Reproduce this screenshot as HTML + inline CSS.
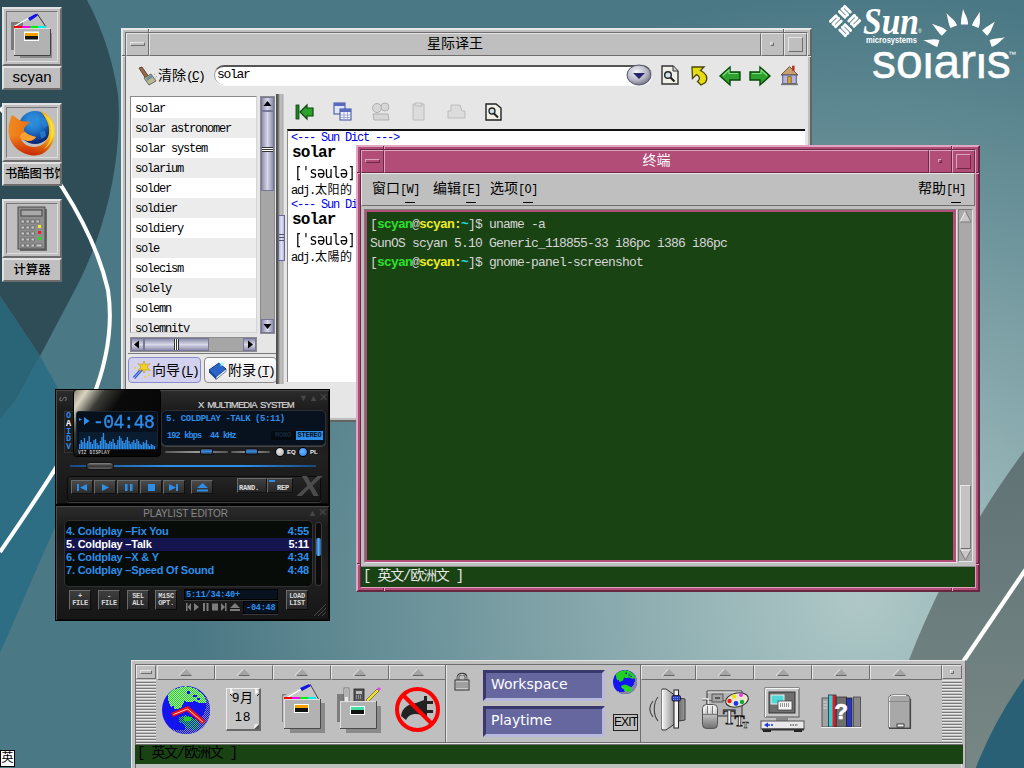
<!DOCTYPE html>
<html lang="zh-CN">
<head>
<meta charset="utf-8">
<title>Solaris CDE Desktop</title>
<style>
*{box-sizing:border-box;margin:0;padding:0}
html,body{width:1024px;height:768px;overflow:hidden}
body{position:relative;font-family:"Liberation Sans","Noto Sans CJK SC",sans-serif;font-size:13px;color:#000;
 background:#4a7884 radial-gradient(ellipse 667px 606px at 860px 600px,#afc8c7 0%,#4a7884 100%)}
.abs{position:absolute}
#bg{position:absolute;left:0;top:0}
/* ---------- CDE window frames ---------- */
.win{position:absolute;background:#bfbfbf;border:2px solid;border-color:#e8e8e8 #646464 #646464 #e8e8e8}
.win.act{background:#b24d78;border-color:#e0a8c2 #662842 #662842 #e0a8c2}
.win .inner{position:absolute;left:2px;top:2px;right:2px;bottom:2px;border:1px solid;border-color:#6e6e6e #e4e4e4 #e4e4e4 #6e6e6e}
.win.act .inner{border-color:#6a2a46 #dca3bd #dca3bd #6a2a46}
.tbar{position:absolute;left:0;right:0;top:0;height:23px;background:#bfbfbf}
.act .tbar{background:#b24d78}
.tb{position:absolute;top:0;height:23px;border:1px solid;border-color:#e4e4e4 #6e6e6e #6e6e6e #e4e4e4}
.act .tb{border-color:#dca3bd #6a2a46 #6a2a46 #dca3bd}
.ttl{left:23px;right:46px;text-align:center;font-size:14px;line-height:18px;font-family:"Liberation Sans","Noto Sans CJK SC",sans-serif}
.act .ttl{color:#fff}
.bmenu{left:0;width:23px}
.bmenu i{position:absolute;left:3px;top:8px;width:15px;height:4px;border:1px solid;border-color:#e4e4e4 #6e6e6e #6e6e6e #e4e4e4}
.act .bmenu i{border-color:#dca3bd #6a2a46 #6a2a46 #dca3bd}
.bmin{right:23px;width:23px}
.bmin i{position:absolute;left:8px;top:8px;width:4px;height:4px;border:1px solid;border-color:#e4e4e4 #6e6e6e #6e6e6e #e4e4e4}
.act .bmin i{border-color:#dca3bd #6a2a46 #6a2a46 #dca3bd}
.bmax{right:0;width:23px}
.bmax i{position:absolute;left:3px;top:3px;width:15px;height:15px;border:1px solid;border-color:#e4e4e4 #6e6e6e #6e6e6e #e4e4e4}
.act .bmax i{border-color:#dca3bd #6a2a46 #6a2a46 #dca3bd}
.client{position:absolute;left:0;right:0;top:23px;bottom:0;overflow:hidden}

/* ---------- desktop icons ---------- */
.dicon{position:absolute;width:60px;height:83px}
.dicon .pic{position:absolute;left:0;top:0;width:60px;height:59px;background:#bfbfbf;border:2px solid;border-color:#e2e2e2 #6c6c6c #6c6c6c #e2e2e2}
.dicon .pic .fr{position:absolute;left:2px;top:2px;width:52px;height:51px;border:1px solid;border-color:#7a7a7a #dedede #dedede #7a7a7a}
.dicon .lbl{position:absolute;left:0;top:59px;width:60px;height:24px;background:#bfbfbf;border:2px solid;border-color:#e2e2e2 #6c6c6c #6c6c6c #e2e2e2;text-align:center;font-size:15px;line-height:19px;white-space:nowrap;overflow:hidden}
.dicon svg{position:absolute;left:0;top:0}

/* ---------- StarDict ---------- */
.mono6{font-family:"Liberation Mono","Noto Sans CJK SC",monospace;font-size:12px;letter-spacing:-1.2px;white-space:pre}
.sdlist{position:absolute;left:130px;top:96px;width:127px;height:237px;background:#fff;border:1px solid;border-color:#8a8a8a #d4d4d4 #d4d4d4 #8a8a8a;overflow:hidden;padding-top:1px}
.sdlist div{height:20px;line-height:19px;padding:2px 0 0 3px;margin-left:1px}
.sdlist div:nth-child(even){background:#ececec}
.gbtn{position:absolute;height:26px;border:1px solid #8c8c8c;border-radius:4px;background:linear-gradient(#fdfdfd,#e9e9e9);font-size:14px;line-height:23px;white-space:nowrap}
.gbtn u{text-decoration:underline}
.sb{position:absolute;background:#a6a6a6}
.sbtn{position:absolute;background:linear-gradient(90deg,#8e8eae,#d8d8e8 50%,#8e8eae);border:1px solid #77779a}

/* ---------- Terminal ---------- */
.tmenu{position:absolute;top:177px;font-size:14px;line-height:22px;white-space:nowrap;font-family:"Liberation Sans","Noto Sans CJK SC",sans-serif}
.tmenu span{font-family:"Liberation Mono",monospace;font-size:12px;letter-spacing:-.6px}
.tmenu u{text-decoration:none;position:relative;display:inline-block}
.tmenu u:after{content:"";position:absolute;left:-2px;right:-2px;bottom:-2px;height:1px;background:#000}
.tline{position:absolute;left:370px;margin-top:1px;font-family:"Liberation Mono","Noto Sans CJK SC",monospace;font-size:13px;letter-spacing:-.8px;line-height:19px;color:#d6d6d6;white-space:pre}
.tline b{font-weight:bold}

/* ---------- XMMS ---------- */
#xm{position:absolute;left:55px;top:389px;width:275px;height:232px;background:#1c1c1c;overflow:hidden;font-family:"Liberation Sans",sans-serif}
#xm .pnl{position:absolute;left:0;width:275px;height:116px;border:1px solid #000;background:linear-gradient(#2c2c2c,#1a1a1a 20%,#202020 60%,#161616);box-shadow:inset 1px 1px 0 #4a4a4a,inset -1px -1px 0 #0a0a0a}
#xm .led{position:absolute;color:#2d8eea;font-family:"Liberation Mono",monospace;font-weight:bold;white-space:pre}
#xm .px{position:absolute;color:#2d8eea;font-family:"Liberation Mono",monospace;font-size:9px;font-weight:bold;white-space:pre;letter-spacing:-.2px}
#xm .cb{position:absolute;top:91px;width:22px;height:14px;background:linear-gradient(#4a4a4a,#2c2c2c);border:1px solid;border-color:#6a6a6a #111 #111 #6a6a6a}
#xm .pb{position:absolute;top:201px;width:22px;height:20px;background:linear-gradient(#3e3e3e,#262626);border:1px solid;border-color:#6a6a6a #0c0c0c #0c0c0c #6a6a6a;color:#d8d8d8;font-family:"Liberation Mono",monospace;font-weight:bold;font-size:7px;line-height:7px;text-align:center;padding-top:2px;letter-spacing:-.3px}
#xm .row{position:absolute;left:11px;width:245px;height:13px;line-height:13px;font-size:11px;font-weight:bold;color:#2d8eea;white-space:nowrap;letter-spacing:-.2px}
#xm .row span{position:absolute;right:2px;top:0}

/* ---------- Front panel ---------- */
#fp{position:absolute;left:131px;top:660px;width:835px;height:110px;background:#bfbfbf;border:1px solid;border-color:#e6e6e6 #6e6e6e #6e6e6e #e6e6e6}
#fp .in{position:absolute;left:3px;top:3px;right:3px;bottom:0;border:1px solid;border-color:#6e6e6e #e6e6e6 #e6e6e6 #6e6e6e}
.fpa{position:absolute;top:665px;height:15px;border:1px solid;border-color:#e6e6e6 #6e6e6e #6e6e6e #e6e6e6;background:#bfbfbf}
.fpa:not(:has(i)):after{content:"";position:absolute;left:50%;top:3px;margin-left:-6px;border:6px solid transparent;border-top:none;border-bottom:6px solid #a4a4a4;filter:drop-shadow(0 1px 0 #666) drop-shadow(-1px 0 0 #eee)}
.ridge{position:absolute;background:repeating-linear-gradient(#e8e8e8 0,#e8e8e8 1px,#bfbfbf 1px,#bfbfbf 2px,#7a7a7a 2px,#7a7a7a 3px)}
.wsb{position:absolute;left:483px;width:122px;height:31px;background:#6767a0;border:3px solid;border-color:#38386c #b8b8dc #b8b8dc #38386c;color:#fff;font-family:"DejaVu Sans","Liberation Sans",sans-serif;font-size:14px;line-height:22px;padding-left:5px;letter-spacing:0}

.nv,.nh{position:absolute;background:#646464}
.nv{width:1px;height:4px;box-shadow:1px 0 0 #e8e8e8}
.nh{height:1px;width:4px;box-shadow:0 1px 0 #e8e8e8}
.act .nv,.act .nh{background:#662842}
.act .nv{box-shadow:1px 0 0 #e0a8c2}.act .nh{box-shadow:0 1px 0 #e0a8c2}
</style>
</head>
<body>
<svg id="bg" width="1024" height="768" viewBox="0 0 1024 768">
 <!-- left dark lens -->
 <path d="M0,0 L87,0 C100,25 112,55 118,95 C121,130 116,180 101,227 C92,255 84,272 78,284 L40,356 L0,296 Z" fill="#2f4d57"/>
 <!-- left mid teal -->
 <path d="M0,296 L40,356 L16,400 L0,420 Z" fill="#2a6477"/>
 <path d="M40,356 L60,392 L60,516 C40,560 15,620 0,653 L0,420 L16,400 Z" fill="#2e6e84"/>
 <!-- white arc -->
 <path d="M0,108 C40,150 92,220 108,290 C114,330 104,370 92,400 C80,430 60,465 0,552" fill="none" stroke="#fff" stroke-width="4"/>
 <!-- right gray shape -->
 <defs><linearGradient id="gsh" x1="0" y1="450" x2="0" y2="768" gradientUnits="userSpaceOnUse"><stop offset="0" stop-color="#5f7275"/><stop offset="1" stop-color="#778785"/></linearGradient></defs>
 <circle cx="1738" cy="981" r="889" fill="url(#gsh)"/>
 <circle cx="1352" cy="914" r="403.600" fill="#2a6076"/>
 <path d="M1026,569 L930,710.500" fill="none" stroke="#fff" stroke-width="4.200"/>
</svg>



<!-- ================= Solaris logo ================= -->
<svg class="abs" style="left:820px;top:0" width="204" height="90" viewBox="820 0 204 90">
 <g transform="translate(845,21) rotate(45) scale(1.06)" stroke="#fff" stroke-width="2.700" stroke-linecap="round" fill="none">
  <path d="M-10,-9.5 H-2.5 M-10,-6 H-2.5 M-10,-2.5 H-2.5"/>
  <path d="M2.5,-10 V-2.5 M6,-10 V-2.5 M9.5,-10 V-2.5"/>
  <path d="M2.5,2.5 H10 M2.5,6 H10 M2.5,9.5 H10"/>
  <path d="M-9.5,2.5 V10 M-6,2.5 V10 M-2.5,2.5 V10"/>
  <path d="M-10,-9.5 V-6 M-2.5,-6 V-2.5 M2.5,-10 H6 M6,-2.5 H9.5 M10,9.5 V6 M2.5,6 V2.5 M-2.5,10 H-6 M-6,2.5 H-9.5" stroke-width="2"/>
 </g>
 <g fill="#fff"><path transform="translate(937.9,43.3) rotate(-72)" d="M-3.6,0.5 C-3.6,-5 -2.5,-8 -1.5,-15 C0.5,-9 3.6,-6 3.6,0.5 Z"/><path transform="translate(944.0,32.9) rotate(-47)" d="M-3.6,0.5 C-3.6,-5 -2.5,-8 -1.5,-15 C0.5,-9 3.6,-6 3.6,0.5 Z"/><path transform="translate(953.6,26.2) rotate(-23)" d="M-3.6,0.5 C-3.6,-5 -2.5,-8 -1.5,-15 C0.5,-9 3.6,-6 3.6,0.5 Z"/><path transform="translate(964.5,24.0) rotate(0)" d="M-3.6,0.5 C-3.6,-5 -2.5,-8 -1.5,-15 C0.5,-9 3.6,-6 3.6,0.5 Z"/><path transform="translate(975.4,26.2) rotate(23)" d="M-3.6,0.5 C-3.6,-5 -2.5,-8 -1.5,-15 C0.5,-9 3.6,-6 3.6,0.5 Z"/><path transform="translate(985.0,32.9) rotate(47)" d="M-3.6,0.5 C-3.6,-5 -2.5,-8 -1.5,-15 C0.5,-9 3.6,-6 3.6,0.5 Z"/><path transform="translate(991.1,43.3) rotate(72)" d="M-3.6,0.5 C-3.6,-5 -2.5,-8 -1.5,-15 C0.5,-9 3.6,-6 3.6,0.5 Z"/></g>
 <text x="863" y="34" font-family="'Liberation Serif',serif" font-style="italic" font-weight="bold" font-size="38" fill="#fff" textLength="56" lengthAdjust="spacingAndGlyphs">Sun</text>
 <text x="918" y="33" font-family="'Liberation Sans',sans-serif" font-size="5" fill="#fff">®</text>
 <text x="866" y="43" font-family="'Liberation Sans',sans-serif" font-size="8.5" font-weight="bold" fill="#fff" textLength="51" lengthAdjust="spacingAndGlyphs">microsystems</text>
 <text x="1008" y="57" font-family="'Liberation Sans',sans-serif" font-size="8" fill="#fff">™</text>
</svg>
<div class="abs" style="left:872px;top:35px;font-family:'Liberation Sans',sans-serif;font-size:48px;line-height:54px;color:#fff;white-space:nowrap;letter-spacing:0;-webkit-text-stroke:.5px #fff">so<span style="display:inline-block;clip-path:inset(18px 0 0 0)">l</span>ar<span style="display:inline-block;clip-path:inset(19px 0 0 0)">i</span>s</div>

<!-- ================= Desktop icons ================= -->
<div class="dicon" style="left:2px;top:7px">
 <div class="pic"><div class="fr"></div>
  <svg width="56" height="55" viewBox="0 0 56 55">
   <rect x="7" y="13" width="12" height="28" fill="#7a7a7a"/>
   <rect x="16" y="24" width="32" height="25" fill="#8a8a8a"/>
   <path d="M10,17.500 L33,4.500" fill="none" stroke="#fff" stroke-width="1.3"/>
   <path d="M33,4.500 L42,18" fill="none" stroke="#333" stroke-width="1"/>
   <path d="M24,9 L32,4.500 L34,6.500 L26,12 Z" fill="#1212e6"/>
   <rect x="10" y="17" width="8" height="2.500" fill="#f00"/><rect x="18" y="17" width="8" height="2.500" fill="#f0f"/><rect x="26" y="17" width="8" height="2.500" fill="#0e0"/><rect x="34" y="17" width="8" height="2.500" fill="#0ee"/>
   <rect x="10" y="19" width="36" height="27" fill="#b2b2b2"/>
   <path d="M10.500,46 V19.500 H46" fill="none" stroke="#dedede" stroke-width="1"/>
   <path d="M10,46.500 H46.500 V20" fill="none" stroke="#444" stroke-width="1"/>
   <rect x="20" y="22.500" width="15" height="9.500" fill="#fff"/>
   <rect x="21" y="24" width="13" height="3" fill="#f7a000"/><rect x="21" y="27" width="13" height="3.500" fill="#111"/>
  </svg>
 </div>
 <div class="lbl" style="line-height:17px">scyan</div>
</div>
<div class="dicon" style="left:2px;top:103px">
 <div class="pic"><div class="fr"></div>
  <svg width="56" height="55" viewBox="0 0 56 55">
   <defs>
    <radialGradient id="ffg" cx="45%" cy="30%" r="65%"><stop offset="0" stop-color="#3ca8ea"/><stop offset=".55" stop-color="#1c6cc4"/><stop offset="1" stop-color="#0a2a78"/></radialGradient>
    <linearGradient id="fff" x1="0" y1="0" x2="1" y2="0"><stop offset="0" stop-color="#ee8a20"/><stop offset=".45" stop-color="#ee7010"/><stop offset=".8" stop-color="#f8b818"/><stop offset="1" stop-color="#fad828"/></linearGradient>
    <linearGradient id="ffb" x1="0" y1="0" x2="0" y2="1"><stop offset=".55" stop-color="#c82808" stop-opacity="0"/><stop offset="1" stop-color="#c02008" stop-opacity=".9"/></linearGradient>
   </defs>
   <circle cx="31" cy="22.500" r="16.500" fill="url(#ffg)"/>
   <path d="M26,9 l5,-1 l3,3 l-2,4 l4,2 l-1,5 l-5,1 l-2,-4 l-3,-2 z M37,12 l5,2 l2,6 l-4,3 l-2,-5 z M36,27 l5,-1 l1,5 l-5,3z" fill="#2a86d6" opacity=".75"/>
   <path id="fxp" d="M8,10 C4,18 3,30 8,38 C14,48 28,53 38,49 C48,44 53,32 50,20 C48,13 43,8 36,6 C42,12 46,20 45,28 C44,36 38,42 30,42 C24,42 19,39 17,34 L24,36 C28,36 31,34 32,32 C28,31 24,30 21,27 C19,25 20,22 23,20 L26,17 C22,16 18,17 15,15 C13,13 10,11 8,10 Z" fill="url(#fff)"/>
   <path d="M8,10 C4,18 3,30 8,38 C14,48 28,53 38,49 C48,44 53,32 50,20 C48,13 43,8 36,6 C42,12 46,20 45,28 C44,36 38,42 30,42 C24,42 19,39 17,34 L24,36 C28,36 31,34 32,32 C28,31 24,30 21,27 C19,25 20,22 23,20 L26,17 C22,16 18,17 15,15 C13,13 10,11 8,10 Z" fill="url(#ffb)"/>
   <path d="M17,34 L24,36 C28,36 31,34 32,32 C28,31 24,30 21,27 C17,28 15,31 17,34Z" fill="#f8a030"/>
   <path d="M40,10 C46,15 49,24 47,32 C46,37 43,41 40,44 C47,40 51,30 49,21 C48,16 44,12 40,10Z" fill="#fce040" opacity=".9"/>
  </svg>
 </div>
 <div class="lbl" style="font-size:12.300px;font-weight:500;letter-spacing:0;text-align:left;padding-left:1px;line-height:20px">书酷图书馆</div>
</div>
<div class="dicon" style="left:2px;top:199px">
 <div class="pic"><div class="fr"></div>
  <svg width="56" height="55" viewBox="0 0 56 55">
   <rect x="16" y="8" width="27" height="42" fill="#6a6a6a"/>
   <rect x="14" y="6" width="27" height="42" fill="#8e8e8e" stroke="#4c4c4c" stroke-width="1"/>
   <rect x="17" y="9" width="21" height="6" fill="#a8a8a8" stroke="#444" stroke-width="1"/>
   <g fill="#c4c4c4" stroke="#555" stroke-width=".6">
    <rect x="17" y="19" width="3.5" height="3"/><rect x="22" y="19" width="3.5" height="3"/><rect x="27" y="19" width="3.5" height="3"/><rect x="32" y="19" width="3.5" height="3"/>
    <rect x="17" y="25" width="3.5" height="3"/><rect x="22" y="25" width="3.5" height="3"/><rect x="27" y="25" width="3.5" height="3"/>
    <rect x="17" y="31" width="3.5" height="3"/><rect x="22" y="31" width="3.5" height="3"/><rect x="27" y="31" width="3.5" height="3"/>
    <rect x="17" y="37" width="3.5" height="3"/><rect x="22" y="37" width="3.5" height="3"/><rect x="27" y="37" width="3.5" height="3"/>
    <rect x="17" y="43" width="3.5" height="3"/><rect x="22" y="43" width="3.5" height="3"/><rect x="27" y="43" width="3.5" height="3"/><rect x="32" y="43" width="6" height="3"/>
   </g>
   <rect x="34" y="24" width="3" height="3" fill="#ee2"/><rect x="34" y="30" width="3" height="3" fill="#e22"/><rect x="34" y="36" width="3" height="3" fill="#2d2"/>
  </svg>
 </div>
 <div class="lbl" style="font-size:12.300px;font-weight:500;line-height:20px">计算器</div>
</div>
<div class="abs" style="left:0;top:750px;width:15px;height:17px;background:#fff;border:1px solid #000;font-size:12px;line-height:15px;text-align:center;overflow:hidden">英</div>

<!-- ================= StarDict window ================= -->
<div class="win" id="w1" style="left:121px;top:28px;width:691px;height:394px"><i class="nv" style="left:25px;top:-1px"></i><i class="nv" style="right:26px;top:-1px"></i><i class="nv" style="left:25px;bottom:-1px"></i><i class="nv" style="right:26px;bottom:-1px"></i><i class="nh" style="top:25px;left:-1px"></i><i class="nh" style="top:25px;right:-1px"></i><i class="nh" style="bottom:26px;left:-1px"></i><i class="nh" style="bottom:26px;right:-1px"></i>
 <div class="inner">
  <div class="tbar">
   <div class="tb bmenu"><i></i></div>
   <div class="tb ttl">星际译王</div>
   <div class="tb bmin"><i></i></div>
   <div class="tb bmax"><i></i></div>
  </div>
  <div class="client" id="sd" style="background:#e6e6e6"></div>
 </div>
</div>


<!-- StarDict content (page coordinates) -->
<svg class="abs" style="left:136px;top:66px" width="22" height="20" viewBox="0 0 22 20">
 <path d="M3,2 L6,1 L13,11 L10,13 Z" fill="#9a6a48" stroke="#4a3020" stroke-width=".8"/>
 <path d="M8,12 L15,8 L20,15 L13,19 Z" fill="#b8b896" stroke="#505040" stroke-width=".8"/>
 <path d="M10,12 L15,9 L17,11 L11,15Z" fill="#6e8e9e"/>
 <path d="M18,8 l1,1 M20,10 l1,1 M19,12 l1,0" stroke="#9ab" stroke-width="1"/>
</svg>
<div class="abs" style="left:158px;top:65px;font-size:14px;line-height:20px;white-space:nowrap">清除<span style="font-family:'Liberation Mono',monospace;font-size:13px;letter-spacing:-1.8px">(<u>C</u>)</span></div>
<div class="abs" style="left:214px;top:65px;width:438px;height:20px;background:#fff;border-radius:10px;border-top:2px solid #555;border-left:1px solid #999;box-shadow:0 1px 0 #fafafa"></div>
<div class="abs mono6" style="left:217px;top:66px;line-height:18px;font-size:13px;letter-spacing:-1.3px">solar</div>
<!-- combo drop button -->
<svg class="abs" style="left:625px;top:62px" width="28" height="26" viewBox="0 0 28 26">
 <defs><radialGradient id="cbg" cx="40%" cy="35%" r="70%"><stop offset="0" stop-color="#f4f4fa"/><stop offset=".6" stop-color="#b6b6c6"/><stop offset="1" stop-color="#6c6c80"/></radialGradient></defs>
 <ellipse cx="14" cy="13" rx="12" ry="10" fill="url(#cbg)" stroke="#55556a" stroke-width="1"/>
 <path d="M8,11 L20,11 L14,17 Z" fill="#26266e"/>
</svg>
<!-- right toolbar icons of entry row -->
<svg class="abs" style="left:659px;top:64px" width="22" height="22" viewBox="0 0 22 22">
 <path d="M3,2 L14,2 L19,7 L19,20 L3,20 Z" fill="#f0f0e8" stroke="#333" stroke-width="1.4"/>
 <path d="M14,2 L14,7 L19,7" fill="#ccc" stroke="#333" stroke-width="1"/>
 <circle cx="9" cy="11" r="3.3" fill="#cfe0f0" stroke="#222" stroke-width="1.4"/><path d="M11.5,13.5 L15.5,17.5" stroke="#222" stroke-width="2.2"/>
</svg>
<svg class="abs" style="left:689px;top:64px" width="24" height="24" viewBox="0 0 24 24">
 <path d="M3,3 L15,3 L11.500,6.500 C17,9 19.500,13.500 16.500,18.500 L12,21 L8.500,17.500 C11.500,15.500 11,12.500 7.500,10.500 L3.500,14.500 Z" fill="#e6dc14" stroke="#4a4600" stroke-width="1.3"/>
</svg>
<svg class="abs" style="left:718px;top:64px" width="24" height="24" viewBox="0 0 24 24">
 <path d="M2,12 L12,3 L12,8 L22,8 L22,16 L12,16 L12,21 Z" fill="#2ea02e" stroke="#0b470b" stroke-width="1.4"/>
 <path d="M5,11.5 L11,6 L11,9.5 L20,9.5" fill="none" stroke="#7fe07f" stroke-width="1.2"/>
</svg>
<svg class="abs" style="left:748px;top:64px" width="24" height="24" viewBox="0 0 24 24">
 <path d="M22,12 L12,3 L12,8 L2,8 L2,16 L12,16 L12,21 Z" fill="#2ea02e" stroke="#0b470b" stroke-width="1.4"/>
 <path d="M4,9.5 L13,9.5 L13,6 L19,11.5" fill="none" stroke="#7fe07f" stroke-width="1.2"/>
</svg>
<svg class="abs" style="left:779px;top:64px" width="21" height="22" viewBox="0 0 24 26">
 <path d="M2,13 L12,3 L22,13 Z" fill="#c8a070" stroke="#5a4630" stroke-width="1"/>
 <rect x="15" y="2" width="3" height="6" fill="#c03020"/>
 <rect x="4" y="13" width="16" height="10" fill="#b4b4e0" stroke="#44446a" stroke-width="1"/>
 <rect x="10" y="15" width="4" height="8" fill="#e8a020" stroke="#553" stroke-width=".8"/>
 <path d="M2,24 L22,24" stroke="#777" stroke-width="2"/>
</svg>
<!-- list -->
<div class="sdlist mono6"><div>solar</div><div>solar astronomer</div><div>solar system</div><div>solarium</div><div>solder</div><div>soldier</div><div>soldiery</div><div>sole</div><div>solecism</div><div>solely</div><div>solemn</div><div>solemnity</div></div>
<!-- vertical scrollbar -->
<div class="sb" style="left:260px;top:96px;width:15px;height:238px;border:1px solid #8c8c8c"></div>
<div class="sbtn" style="left:261px;top:97px;width:13px;height:14px"></div>
<div class="sbtn" style="left:261px;top:111px;width:13px;height:80px"></div>
<div class="sbtn" style="left:261px;top:319px;width:13px;height:14px"></div>
<svg class="abs" style="left:261px;top:97px" width="13" height="236" viewBox="0 0 13 236">
 <path d="M6.5,4 L10.5,9 L2.5,9 Z" fill="#000"/><path d="M6.5,232 L10.5,227 L2.5,227 Z" fill="#000"/>
 <path d="M1,50.5 H12 M1,52.5 H12 M1,54.5 H12" stroke="#333" stroke-width="1"/>
 <path d="M1,51.5 H12 M1,53.5 H12" stroke="#fff" stroke-width="1"/>
</svg>
<!-- horizontal scrollbar -->
<div class="sb" style="left:130px;top:337px;width:127px;height:15px;border:1px solid #8c8c8c"></div>
<div class="sbtn" style="left:131px;top:338px;width:13px;height:13px;background:linear-gradient(#8e8eae,#d8d8e8 50%,#8e8eae)"></div>
<div class="sbtn" style="left:144px;top:338px;width:65px;height:13px;background:linear-gradient(#8e8eae,#d8d8e8 50%,#8e8eae)"></div>
<div class="sbtn" style="left:243px;top:338px;width:13px;height:13px;background:linear-gradient(#8e8eae,#d8d8e8 50%,#8e8eae)"></div>
<svg class="abs" style="left:131px;top:338px" width="125" height="13" viewBox="0 0 125 13">
 <path d="M3,6.5 L8,2.5 L8,10.5 Z" fill="#000"/><path d="M122,6.5 L117,2.5 L117,10.5 Z" fill="#000"/>
 <path d="M43.5,1 V12 M45.5,1 V12 M47.5,1 V12" stroke="#333" stroke-width="1"/><path d="M44.5,1 V12 M46.5,1 V12" stroke="#fff" stroke-width="1"/>
</svg>
<div class="abs" style="left:128px;top:353px;width:149px;height:1px;background:#7a7a7a"></div>
<!-- bottom buttons -->
<div class="gbtn" style="left:128px;top:357px;width:73px;background:#d2d2ee;border-color:#8a8ad0"></div>
<div class="gbtn" style="left:204px;top:357px;width:73px"></div>
<svg class="abs" style="left:131px;top:360px" width="22" height="20" viewBox="0 0 22 20">
 <path d="M3,18 L11,9" stroke="#2a58c8" stroke-width="3"/><path d="M3,18 L11,9" stroke="#9cc0ff" stroke-width="1"/>
 <path d="M13,1 L14.5,5 L19,3.5 L16,7 L19,10.5 L14.5,9.5 L13,13 L11.5,9.5 L7,10.5 L10,7 L7,3.5 L11.5,5Z" fill="#f8d020" stroke="#b48a00" stroke-width=".5"/>
 <circle cx="4" cy="8" r="1" fill="#f8d020"/><circle cx="18" cy="15" r="1" fill="#f8d020"/><circle cx="14" cy="17" r="1" fill="#f8d020"/>
</svg>
<div class="abs" style="left:152px;top:358px;font-size:14px;line-height:24px;white-space:nowrap">向导<span style="font-family:'Liberation Mono',monospace;font-size:13px;letter-spacing:-1.8px">(<u>L</u>)</span></div>
<svg class="abs" style="left:207px;top:360px" width="22" height="20" viewBox="0 0 22 20">
 <path d="M2,10 L12,3 L19,9 L9,17 Z" fill="#2a64c8" stroke="#123a86" stroke-width="1"/>
 <path d="M2,10 L9,17 L9,19.5 L2,12.5Z" fill="#1a4aa0"/><path d="M9,17 L19,9 L19,11.5 L9,19.5Z" fill="#e8eef8" stroke="#123a86" stroke-width=".6"/>
 <path d="M15,1 l.8,2 l2,.2 l-1.6,1.2 l.6,2 l-1.8,-1.2 l-1.8,1.2 l.6,-2 l-1.6,-1.2 l2,-.2z" fill="#9ff"/>
</svg>
<div class="abs" style="left:228px;top:358px;font-size:14px;line-height:24px;white-space:nowrap">附录<span style="font-family:'Liberation Mono',monospace;font-size:13px;letter-spacing:-1.8px">(<u>T</u>)</span></div>
<!-- pane separator -->
<div class="abs" style="left:276px;top:94px;width:9px;height:290px;background:linear-gradient(90deg,#4e4e4e 0,#5a5a5a 2px,#9a9a9a 3px,#c4c4c4 5px,#a8a8a8 7px,#e6e6e6 8px)"></div>
<div class="abs" style="left:278px;top:215px;width:7px;height:46px;border:1px solid #6a6a9a;background:linear-gradient(90deg,#b4b4d0,#e4e4f0,#b4b4d0)"></div>
<div class="abs" style="left:279px;top:234px;width:5px;height:1px;background:#556;box-shadow:0 3px 0 #556,0 6px 0 #556"></div>
<!-- dictionary toolbar -->
<svg class="abs" style="left:294px;top:101px" width="210" height="22" viewBox="0 0 210 22">
 <g>
  <rect x="2" y="4" width="3" height="14" fill="#1e8a1e" stroke="#0a400a" stroke-width=".8"/>
  <path d="M6,11 L13,4 L13,7 L19,7 L19,15 L13,15 L13,18 Z" fill="#2ea02e" stroke="#0b470b" stroke-width="1.2"/>
 </g>
 <g transform="translate(38,0)">
  <rect x="2" y="2" width="11" height="11" fill="#dfe6f6" stroke="#3a4a9a" stroke-width="1"/><rect x="2" y="2" width="11" height="3" fill="#5a6ac0"/>
  <rect x="8" y="8" width="11" height="11" fill="#eef2fa" stroke="#3a4a9a" stroke-width="1"/><rect x="8" y="8" width="11" height="3" fill="#5a6ac0"/>
  <path d="M8,14 h11 M8,16.5 h11 M12,11 v8 M15.5,11 v8" stroke="#8a96c8" stroke-width=".7"/>
 </g>
 <g transform="translate(76,0)" fill="#d6d6d6" stroke="#b0b0b0" stroke-width="1">
  <circle cx="7" cy="7" r="4.5"/><circle cx="15" cy="6" r="4"/><path d="M3,13 H18 L19,19 H4 Z"/>
 </g>
 <g transform="translate(114,0)" fill="#dcdcdc" stroke="#bcbcbc" stroke-width="1">
  <path d="M5,3 H16 V19 H5 Z"/><path d="M7,2 h7 v3 h-7z"/>
 </g>
 <g transform="translate(152,0)" fill="#dcdcdc" stroke="#bcbcbc" stroke-width="1">
  <path d="M5,4 H14 L16,10 H19 V17 H2 V10 H5 Z"/>
 </g>
 <g transform="translate(190,0)">
  <path d="M2,3 H12 L17,7 V19 H2 Z" fill="#f0f0e8" stroke="#222" stroke-width="1.4"/>
  <circle cx="8" cy="10" r="3" fill="#cfe0f0" stroke="#222" stroke-width="1.3"/><path d="M10,12.5 L14,16.5" stroke="#222" stroke-width="2"/>
 </g>
</svg>
<!-- text view -->
<div class="abs" style="left:287px;top:129px;width:518px;height:253px;background:#fff;border-top:2px solid #111;border-left:1px solid #888"></div>
<div class="abs mono6" style="left:291px;top:131px;line-height:14px;color:#0000e6">&lt;--- Sun Dict ---&gt;</div>
<div class="abs" style="left:292px;top:144px;font-family:'Liberation Mono',monospace;font-weight:bold;font-size:16px;line-height:19px;letter-spacing:-.9px">solar</div>
<div class="abs" style="left:294px;top:162px;font-family:'DejaVu Sans Mono','Liberation Mono',monospace;font-size:14px;line-height:20px;letter-spacing:-.8px;transform:scaleY(1.14)">['səulə]</div>
<div class="abs mono6" style="left:291px;top:183px;line-height:16px">adj.<span style="letter-spacing:.5px">太阳的</span></div>
<div class="abs mono6" style="left:291px;top:198px;line-height:14px;color:#0000e6">&lt;--- Sun Dict ---&gt;</div>
<div class="abs" style="left:292px;top:211px;font-family:'Liberation Mono',monospace;font-weight:bold;font-size:16px;line-height:19px;letter-spacing:-.9px">solar</div>
<div class="abs" style="left:294px;top:229px;font-family:'DejaVu Sans Mono','Liberation Mono',monospace;font-size:14px;line-height:20px;letter-spacing:-.8px;transform:scaleY(1.14)">['səulə]</div>
<div class="abs mono6" style="left:291px;top:250px;line-height:16px;font-family:'Liberation Mono','Noto Sans CJK TC',monospace">adj.<span style="letter-spacing:.5px">太陽的</span></div>

<!-- ================= Terminal window ================= -->
<div class="win act" id="w2" style="left:356px;top:145px;width:624px;height:447px"><i class="nv" style="left:25px;top:-1px"></i><i class="nv" style="right:26px;top:-1px"></i><i class="nv" style="left:25px;bottom:-1px"></i><i class="nv" style="right:26px;bottom:-1px"></i><i class="nh" style="top:25px;left:-1px"></i><i class="nh" style="top:25px;right:-1px"></i><i class="nh" style="bottom:26px;left:-1px"></i><i class="nh" style="bottom:26px;right:-1px"></i>
 <div class="inner">
  <div class="tbar">
   <div class="tb bmenu"><i></i></div>
   <div class="tb ttl">终端</div>
   <div class="tb bmin"><i></i></div>
   <div class="tb bmax"><i></i></div>
  </div>
  <div class="client" id="term" style="background:#bfbfbf"></div>
 </div>
</div>


<!-- Terminal content (page coordinates) -->
<div class="abs" style="left:361px;top:173px;width:614px;height:33px;background:#bfbfbf;border:1px solid;border-color:#e6e6e6 #6e6e6e #6e6e6e #e6e6e6"></div>
<div class="tmenu" style="left:372px">窗口<span>[<u>W</u>]</span></div>
<div class="tmenu" style="left:433px">编辑<span>[<u>E</u>]</span></div>
<div class="tmenu" style="left:490px">选项<span>[<u>O</u>]</span></div>
<div class="tmenu" style="left:918px">帮助<span>[<u>H</u>]</span></div>
<div class="abs" style="left:361px;top:206px;width:614px;height:361px;background:#bfbfbf"></div>
<div class="abs" style="left:364px;top:209px;width:593px;height:354px;background:#b24d78;border:1px solid;border-color:#7c7c7c #e6e6e6 #e6e6e6 #7c7c7c"></div>
<div class="abs" style="left:367px;top:212px;width:586px;height:348px;background:#1a4314"></div>
<div class="tline" style="top:214px">[<b style="color:#2ce02c">scyan</b>@<b style="color:#ecec20">scyan</b><b style="color:#ecec20">:</b><b style="color:#20dcdc">~</b>]$ uname -a</div>
<div class="tline" style="top:233px">SunOS scyan 5.10 Generic_118855-33 i86pc i386 i86pc</div>
<div class="tline" style="top:252px">[<b style="color:#2ce02c">scyan</b>@<b style="color:#ecec20">scyan</b><b style="color:#ecec20">:</b><b style="color:#20dcdc">~</b>]$ gnome-panel-screenshot</div>
<!-- terminal scrollbar -->
<div class="abs" style="left:958px;top:209px;width:15px;height:353px;background:#a9a9a9;border:1px solid;border-color:#7a7a7a #e4e4e4 #e4e4e4 #7a7a7a"></div>
<div class="abs" style="left:960px;top:485px;width:11px;height:64px;background:#c3c3c3;border:1px solid;border-color:#e8e8e8 #707070 #707070 #e8e8e8"></div>
<svg class="abs" style="left:959px;top:210px" width="13" height="351" viewBox="0 0 13 351">
 <path d="M6.5,1 L12,12 L1,12 Z" fill="#c8c8c8"/><path d="M6.5,1 L1,12" stroke="#efefef" stroke-width="1" fill="none"/><path d="M6.5,1 L12,12 L1,12" stroke="#7a7a7a" stroke-width="1" fill="none"/>
 <path d="M6.5,350 L12,340 L1,340 Z" fill="#c8c8c8"/><path d="M1,340 L12,340" stroke="#efefef" stroke-width="1"/><path d="M1,340 L6.5,350 L12,340" stroke="#7a7a7a" stroke-width="1" fill="none"/>
</svg>
<!-- terminal status strip -->
<div class="abs" style="left:361px;top:566px;width:614px;height:21px;background:#1a4314;border-top:1px solid #8a8a8a"></div>
<div class="abs" style="left:363px;top:567px;font-family:'Liberation Mono','Noto Sans CJK SC',monospace;font-size:14px;line-height:19px;color:#e8e8e8;white-space:pre;letter-spacing:-1.2px">[ 英文/欧洲文 ]</div>


<!-- ================= XMMS ================= -->
<div id="xm">
 <div class="pnl" style="top:0"></div>
 <div class="pnl" style="top:116px"></div>
 <!-- main window -->
 <div class="abs" style="left:18px;top:0;width:88px;height:68px;border-radius:4px;background:linear-gradient(125deg,#8a8676 0,#d8d4c0 10%,#3a3a36 24%,#0a0a0a 40%,#050505 100%);border:1px solid #000"></div>
 <div class="abs" style="left:21px;top:22px;width:82px;height:39px;border-radius:3px;background:#06101c;border:1px solid #1a2430"></div>
 <div class="abs" style="left:4px;top:4px;color:#777;font-size:9px;line-height:10px">ᔕ</div>
 <div class="abs" style="left:9px;top:22px;width:9px;height:42px;border:1px solid #333;border-right:none"></div>
 <div class="px" style="left:11px;top:24px;line-height:7.750px;font-size:8.500px;color:#2d8eea">O<br><span style="color:#fff">A</span><br>I<br>D<br>V</div>
 <svg class="abs" style="left:24px;top:27px" width="12" height="10" viewBox="0 0 12 10" fill="#2d8eea"><path d="M0,2 L3,3.500 L0,5Z"/><path d="M5,1 L10.500,5 L5,9Z"/></svg>
 <div class="led" style="left:38px;top:22.500px;font-size:18px;line-height:20px;letter-spacing:-.6px;font-weight:normal;-webkit-text-stroke:.35px #2d8eea;transform:scaleY(1.12);transform-origin:0 50%">-04:48</div>
 <svg class="abs" style="left:24px;top:43px" width="78" height="18" viewBox="0 0 76 18" preserveAspectRatio="none" fill="#2d8eea"><rect x="0" y="0" width="76" height="17" fill="#0a1c30"/><rect x="0.0" y="12" width="1.3" height="5"/><rect x="1.6" y="8" width="1.3" height="9"/><rect x="3.1" y="10" width="1.3" height="7"/><rect x="4.7" y="6" width="1.3" height="11"/><rect x="6.2" y="11" width="1.3" height="6"/><rect x="7.8" y="9" width="1.3" height="8"/><rect x="9.3" y="4" width="1.3" height="13"/><rect x="10.8" y="10" width="1.3" height="7"/><rect x="12.4" y="12" width="1.3" height="5"/><rect x="14.0" y="8" width="1.3" height="9"/><rect x="15.5" y="7" width="1.3" height="10"/><rect x="17.1" y="11" width="1.3" height="6"/><rect x="18.6" y="13" width="1.3" height="4"/><rect x="20.2" y="9" width="1.3" height="8"/><rect x="21.7" y="5" width="1.3" height="12"/><rect x="23.2" y="1" width="1.3" height="16"/><rect x="24.8" y="8" width="1.3" height="9"/><rect x="26.4" y="11" width="1.3" height="6"/><rect x="27.9" y="12" width="1.3" height="5"/><rect x="29.4" y="9" width="1.3" height="8"/><rect x="31.0" y="10" width="1.3" height="7"/><rect x="32.6" y="7" width="1.3" height="10"/><rect x="34.1" y="11" width="1.3" height="6"/><rect x="35.6" y="13" width="1.3" height="4"/><rect x="37.2" y="8" width="1.3" height="9"/><rect x="38.8" y="4" width="1.3" height="13"/><rect x="40.3" y="6" width="1.3" height="11"/><rect x="41.9" y="9" width="1.3" height="8"/><rect x="43.4" y="11" width="1.3" height="6"/><rect x="45.0" y="8" width="1.3" height="9"/><rect x="46.5" y="5" width="1.3" height="12"/><rect x="48.1" y="9" width="1.3" height="8"/><rect x="49.6" y="12" width="1.3" height="5"/><rect x="51.1" y="10" width="1.3" height="7"/><rect x="52.7" y="8" width="1.3" height="9"/><rect x="54.2" y="11" width="1.3" height="6"/><rect x="55.8" y="7" width="1.3" height="10"/><rect x="57.4" y="9" width="1.3" height="8"/><rect x="58.9" y="12" width="1.3" height="5"/><rect x="60.5" y="13" width="1.3" height="4"/><rect x="62.0" y="10" width="1.3" height="7"/><rect x="63.6" y="11" width="1.3" height="6"/><rect x="65.1" y="8" width="1.3" height="9"/><rect x="66.7" y="12" width="1.3" height="5"/><rect x="68.2" y="14" width="1.3" height="3"/><rect x="69.8" y="12" width="1.3" height="5"/><rect x="71.3" y="13" width="1.3" height="4"/><rect x="72.9" y="14" width="1.3" height="3"/></svg>
 <div class="abs" style="left:23px;top:61px;font-size:4.5px;line-height:6px;color:#bbb;font-weight:bold;letter-spacing:.2px;font-family:'Liberation Mono',monospace">VIZ DISPLAY</div>
 <div class="abs" style="left:143px;top:10px;width:96px;font-size:9.5px;line-height:12px;color:#d6d6d6;white-space:nowrap;letter-spacing:-.85px;word-spacing:2px;-webkit-text-stroke:.2px #d6d6d6">X MULTIMEDIA SYSTEM</div>
 <div class="abs" style="left:244px;top:3px;color:#484848;font-size:9px;line-height:10px;letter-spacing:1px;white-space:nowrap">▼▲<span style="font-size:11px">✕</span></div>
 <div class="abs" style="left:106px;top:21px;width:165px;height:36px;border-radius:5px;background:#08121e;border:1px solid #2a3038;box-shadow:0 1px 0 #444"></div>
 <div class="px" style="left:111px;top:25px;line-height:10px;letter-spacing:-.45px">5. COLDPLAY -TALK (5:11)</div>
 <div class="px" style="left:112px;top:42px;line-height:10px;font-size:8.5px;letter-spacing:-.8px">192 kbps  44 kHz</div>
 <div class="px" style="left:216px;top:42px;width:24px;height:9px;line-height:9px;font-size:7px;color:#16283c;background:#050a10;text-align:center">MONO</div>
 <div class="px" style="left:241px;top:42px;width:27px;height:9px;line-height:9px;font-size:7px;color:#061018;background:#2d8eea;text-align:center">STEREO</div>
 <!-- sliders -->
 <div class="abs" style="left:110px;top:62px;width:63px;height:2px;background:linear-gradient(90deg,#555,#999 50%,#555);border-radius:1px"></div>
 <div class="abs" style="left:145px;top:59px;width:13px;height:7px;background:linear-gradient(#445,#2d8eea 50%,#334);border-radius:2px;border:1px solid #111"></div>
 <div class="abs" style="left:176px;top:62px;width:39px;height:2px;background:linear-gradient(90deg,#555,#999 50%,#555);border-radius:1px"></div>
 <div class="abs" style="left:190px;top:59px;width:13px;height:7px;background:linear-gradient(#445,#2d8eea 50%,#334);border-radius:2px;border:1px solid #111"></div>
 <div class="abs" style="left:220px;top:58px;width:10px;height:10px;border-radius:50%;background:radial-gradient(circle at 40% 40%,#eee,#999);border:1px solid #000"></div>
 <div class="abs" style="left:232px;top:60px;font-size:6px;line-height:7px;color:#eee;font-weight:bold">EQ</div>
 <div class="abs" style="left:243px;top:58px;width:10px;height:10px;border-radius:50%;background:radial-gradient(circle at 40% 40%,#6bb6ff,#1f7ee0);border:1px solid #000"></div>
 <div class="abs" style="left:255px;top:60px;font-size:6px;line-height:7px;color:#eee;font-weight:bold">PL</div>
 <!-- seek bar -->
 <div class="abs" style="left:15px;top:76px;width:246px;height:2px;background:linear-gradient(90deg,#1a4a80,#2d8eea 40%,#2d8eea 70%,#1a4a80)"></div>
 <div class="abs" style="left:31px;top:73px;width:28px;height:8px;border-radius:4px;background:linear-gradient(#888,#333 50%,#666);border:1px solid #111"></div>
 <!-- control buttons -->
 <div class="abs" style="left:12px;top:87px;width:254px;height:26px;border-radius:3px;background:linear-gradient(#252525,#161616);border:1px solid #0a0a0a;box-shadow:0 1px 0 #3c3c3c"></div>
 <div class="cb" style="left:16px"></div><div class="cb" style="left:39px"></div><div class="cb" style="left:62px"></div><div class="cb" style="left:85px"></div><div class="cb" style="left:108px"></div><div class="cb" style="left:136px"></div>
 <svg class="abs" style="left:16px;top:90px" width="144" height="16" viewBox="0 0 144 16" fill="#2d8eea">
  <rect x="6" y="5" width="2" height="7"/><path d="M16,5 V12 L9,8.5Z"/>
  <path d="M31,5 V12 L38,8.5Z"/>
  <rect x="54" y="5" width="2.5" height="7"/><rect x="59" y="5" width="2.5" height="7"/>
  <rect x="77" y="5" width="7" height="7"/>
  <path d="M98,5 V12 L105,8.5Z"/><rect x="105" y="5" width="2" height="7"/>
  <path d="M126,9 L131.5,4 L137,9Z"/><rect x="126" y="10.5" width="11" height="2"/>
 </svg>
 <div class="abs" style="left:182px;top:89px;width:30px;height:15px;background:linear-gradient(#404040,#262626);border:1px solid;border-color:#6a6a6a #111 #111 #6a6a6a"></div>
 <div class="abs" style="left:212px;top:89px;width:26px;height:15px;background:linear-gradient(#404040,#262626);border:1px solid;border-color:#6a6a6a #111 #111 #6a6a6a"></div>
 <div class="abs" style="left:214px;top:91px;width:6px;height:2px;background:#2d8eea"></div>
 <div class="abs" style="left:184px;top:95px;font-family:'Liberation Mono',monospace;font-size:7px;font-weight:bold;line-height:8px;color:#e0e0e0;letter-spacing:-.2px">RAND.</div>
 <div class="abs" style="left:222px;top:95px;font-family:'Liberation Mono',monospace;font-size:7px;font-weight:bold;line-height:8px;color:#e0e0e0;letter-spacing:-.2px">REP</div>
 <div class="abs" style="left:243px;top:82px;font-family:'Liberation Sans',sans-serif;font-style:italic;font-weight:bold;font-size:30px;line-height:30px;color:#4c4c4c;transform:scaleX(1.15);transform-origin:0 0">X</div>
 <!-- playlist -->
 <div class="abs" style="left:0;top:119px;width:261px;text-align:center;font-size:10px;line-height:12px;color:#888;letter-spacing:-.1px">PLAYLIST EDITOR</div>
 <div class="abs" style="left:253px;top:118px;color:#484848;font-size:9px;line-height:10px;letter-spacing:1px;white-space:nowrap">▲<span style="font-size:11px">✕</span></div>
 <div class="abs" style="left:9px;top:131px;width:249px;height:67px;border-radius:5px;background:#080c08;border:1px solid #303030"></div>
 <div class="abs" style="left:10px;top:149px;width:247px;height:13px;background:#14144e"></div>
 <div class="row" style="top:136px">4. Coldplay –Fix You<span>4:55</span></div>
 <div class="row" style="top:149px;color:#fff">5. Coldplay –Talk<span>5:11</span></div>
 <div class="row" style="top:162px">6. Coldplay –X &amp; Y<span>4:34</span></div>
 <div class="row" style="top:175px">7. Coldplay –Speed Of Sound<span>4:48</span></div>
 <div class="abs" style="left:260px;top:133px;width:7px;height:64px;border-radius:3px;background:#0a0a0a;border:1px solid #3a3a3a"></div>
 <div class="abs" style="left:261px;top:149px;width:5px;height:18px;border-radius:2px;background:linear-gradient(90deg,#1a5aa0,#5aaaf0,#1a5aa0)"></div>
 <div class="pb" style="left:14px">+<br>FILE</div><div class="pb" style="left:43px">-<br>FILE</div><div class="pb" style="left:72px">SEL<br>ALL</div><div class="pb" style="left:100px">MiSC<br>OPT.</div><div class="pb" style="left:231px">LOAD<br>LIST</div>
 <div class="abs" style="left:129px;top:200px;width:94px;height:11px;background:#08121e;border:1px solid #000;box-shadow:0 1px 0 #3a3a3a"></div>
 <div class="px" style="left:131px;top:201px;line-height:10px;font-size:8.5px">5:11/34:40+</div>
 <svg class="abs" style="left:131px;top:213px" width="56" height="10" viewBox="0 0 56 10" fill="#7c7c7c"><rect x="0" y="1" width="1.500" height="8"/><path d="M5,1 V9 L1.500,5Z"/><path d="M8,1 V9 L13,5Z"/><rect x="17" y="1" width="2" height="8"/><rect x="20.500" y="1" width="2" height="8"/><rect x="26" y="1.500" width="6" height="7"/><path d="M35,1 V9 L39,5Z"/><rect x="39" y="1" width="1.500" height="8"/><path d="M44,6 L49,1 L54,6Z"/><rect x="44" y="7" width="10" height="2"/></svg>
 <div class="abs" style="left:188px;top:212px;width:35px;height:13px;background:#08121e;border:1px solid #000;box-shadow:0 1px 0 #3a3a3a"></div>
 <div class="px" style="left:191px;top:214px;line-height:10px;font-size:8.5px">-04:48</div>
 <svg class="abs" style="left:258px;top:214px" width="14" height="14" viewBox="0 0 14 14" stroke="#484848" stroke-width="1"><path d="M13,1 L1,13 M13,5 L5,13 M13,9 L9,13"/></svg>
</div>


<!-- ================= Front panel ================= -->
<div id="fp"><div class="in"></div></div>
<div class="abs" style="left:136px;top:665px;width:20px;height:14px;border:1px solid;border-color:#e6e6e6 #6e6e6e #6e6e6e #e6e6e6"></div>
<div class="abs" style="left:140px;top:670px;width:12px;height:4px;border:1px solid;border-color:#e6e6e6 #6e6e6e #6e6e6e #e6e6e6"></div>
<div class="ridge" style="left:136px;top:680px;width:20px;height:62px"></div>
<div class="abs" style="left:942px;top:665px;width:20px;height:14px;border:1px solid;border-color:#e6e6e6 #6e6e6e #6e6e6e #e6e6e6"></div>
<div class="abs" style="left:950px;top:670px;width:4px;height:4px;border:1px solid;border-color:#e6e6e6 #6e6e6e #6e6e6e #e6e6e6"></div>
<div class="ridge" style="left:942px;top:680px;width:20px;height:62px"></div>
<div class="fpa" style="left:157px;width:58px"></div><div class="fpa" style="left:215px;width:58px"></div><div class="fpa" style="left:273px;width:58px"></div><div class="fpa" style="left:331px;width:58px"></div><div class="fpa" style="left:389px;width:58px"></div><div class="fpa" style="left:641px;width:55px"></div><div class="fpa" style="left:696px;width:58px"></div><div class="fpa" style="left:754px;width:58px"></div><div class="fpa" style="left:812px;width:58px"></div><div class="fpa" style="left:870px;width:72px"><i style="position:absolute;left:23px;top:3px;border:6px solid transparent;border-top:none;border-bottom:6px solid #a4a4a4;filter:drop-shadow(0 1px 0 #666) drop-shadow(-1px 0 0 #eee)"></i></div>
<div class="abs" style="left:445px;top:665px;width:1px;height:77px;background:#6e6e6e"></div><div class="abs" style="left:446px;top:665px;width:1px;height:77px;background:#e6e6e6"></div>
<div class="abs" style="left:640px;top:665px;width:1px;height:77px;background:#6e6e6e"></div>
<div class="abs" style="left:136px;top:742px;width:826px;height:1px;background:#6e6e6e"></div><div class="abs" style="left:136px;top:743px;width:826px;height:1px;background:#e6e6e6"></div>
<!-- clock globe -->
<svg class="abs" style="left:160px;top:684px" width="52" height="52" viewBox="0 0 52 52" shape-rendering="crispEdges">
 <defs>
  <pattern id="dth" width="2" height="2" patternUnits="userSpaceOnUse"><rect width="2" height="2" fill="#1414f0"/><rect width="1" height="1" fill="#22d822"/><rect x="1" y="1" width="1" height="1" fill="#22d822"/></pattern>
  <pattern id="dth1" width="2" height="2" patternUnits="userSpaceOnUse"><rect width="2" height="2" fill="#b4e6b4"/><rect width="1" height="1" fill="#22d022"/><rect x="1" y="1" width="1" height="1" fill="#22d022"/></pattern>
  <pattern id="dth2" width="2" height="2" patternUnits="userSpaceOnUse"><rect width="2" height="2" fill="#1414f0"/><rect width="1" height="1" fill="#8c8c9c"/><rect x="1" y="1" width="1" height="1" fill="#8c8c9c"/></pattern>
  <clipPath id="gcp"><circle cx="26" cy="26" r="24"/></clipPath>
  <mask id="shm"><rect width="52" height="52" fill="#fff"/><circle cx="19" cy="19" r="27" fill="#000"/></mask>
 </defs>
 <g id="glb">
 <circle cx="26" cy="26" r="24" fill="#1414f0" shape-rendering="auto"/>
 <g clip-path="url(#gcp)">
  <path d="M7.700,11.200 L13.600,5.400 L25.300,2 L34.700,4.200 L42.900,10 L47.600,18.300 L40.500,19.400 L34.700,17.100 L28.800,18.300 L24.100,17.100 L21.800,23 L17.100,25.300 L12.400,24.100 L8.900,19.400 Z" fill="url(#dth1)"/>
  <path d="M27,7 h3 v3 h-3z M33,11 h4 v2 h-4z M37,14 h3 v2 h-3z M12,22 h2 v2 h-2z" fill="#1414f0"/>
  <path d="M18.300,33.500 L26.500,31.200 L34.700,34.700 L42.900,39.400 L38.200,45.200 L31.200,48.200 L25.300,46.400 L24.100,40.500 L19.400,38.200 Z" fill="url(#dth)"/>
  <path d="M24,33 h7 v4 h-7z" fill="#22d022"/>
  <rect width="52" height="52" fill="url(#dth2)" mask="url(#shm)" opacity=".95"/>
  <path d="M30,40 L38,38 L40,43 L33,47Z" fill="url(#dth)"/>
 </g>
 </g>
 <g shape-rendering="auto"><path d="M12,31 L27.500,24.500 L44,38.500" fill="none" stroke="#f01010" stroke-width="4.500" stroke-linejoin="miter"/>
 <path d="M13.500,30.500 L27.500,25 L43,38" fill="none" stroke="#ffd0d0" stroke-width="1"/></g>
</svg>
<!-- calendar -->
<div class="abs" style="left:226px;top:688px;width:35px;height:43px;background:#c4c4c4;border:2px solid;border-width:1px 2px 2px 1px;border-color:#ececec #6a6a6a #6a6a6a #ececec;font-size:13px;line-height:18.500px;text-align:center;font-family:'Liberation Sans','Noto Sans CJK SC',sans-serif;letter-spacing:1px">9月<br>18</div>
<svg class="abs" style="left:226px;top:686px" width="36" height="46" viewBox="0 0 36 46"><path d="M5,2 v5 l2,-2 M30,2 v5 l2,-2" stroke="#fff" stroke-width="1.5" fill="none"/><path d="M4,8 l2,2 M33,8 l-2,2" stroke="#222" stroke-width="1"/><path d="M28,43 L33,38 L33,43Z" fill="#555"/><path d="M28,43 L33,38 L28.500,38.500Z" fill="#f4f4f4"/></svg>
<!-- home folder -->
<svg class="abs" style="left:278px;top:682px" width="50" height="54" viewBox="0 0 50 54">
 <rect x="4" y="12" width="9" height="28" fill="#7d7d7d"/>
 <path d="M5,14 L32,2 L41,17 L41,20 L5,40 Z" fill="#c6c6c6"/>
 <path d="M10,15 L32,2" fill="none" stroke="#fff" stroke-width="1.4"/><path d="M32,2 L41,18" fill="none" stroke="#444" stroke-width="1"/>
 <path d="M22,6 L31,2 L33,4 L24,9 Z" fill="#1212e6"/>
 <rect x="12" y="21" width="35" height="30" fill="#8a8a8a"/>
 <rect x="6" y="15" width="8" height="2.4" fill="#f00"/><rect x="14" y="15" width="8" height="2.4" fill="#f0f"/><rect x="22" y="15" width="8" height="2.4" fill="#0e0"/><rect x="30" y="15" width="8" height="2.4" fill="#0ee"/>
 <rect x="6" y="17" width="36" height="29" fill="#b2b2b2"/>
 <path d="M6.5,46 V17.5 H42" fill="none" stroke="#e0e0e0" stroke-width="1"/><path d="M6,46.5 H42.5 V17" fill="none" stroke="#4a4a4a" stroke-width="1"/>
 <rect x="16" y="22" width="15" height="9" fill="#fff"/><rect x="17" y="23" width="13" height="3" fill="#f7a000"/><rect x="17" y="26" width="13" height="4" fill="#111"/>
</svg>
<!-- apps folder -->
<svg class="abs" style="left:334px;top:682px" width="52" height="54" viewBox="0 0 52 54">
 <rect x="3" y="12" width="9" height="28" fill="#7d7d7d"/>
 <rect x="10" y="6" width="5" height="14" fill="#e8e8e8" stroke="#555" stroke-width=".7"/><path d="M11,8 h3 M11,10 h3 M11,12 h3 M11,14 h3" stroke="#333" stroke-width=".6"/>
 <rect x="20" y="7" width="10" height="13" fill="#555" stroke="#222" stroke-width=".8"/><rect x="22" y="9" width="6" height="3" fill="#bbb"/><path d="M22,14 h6 M22,16 h6" stroke="#ccc" stroke-width="1" stroke-dasharray="1 1"/>
 <path d="M32,18 L43,7 L45,9 L34,20 Z" fill="#f0e020" stroke="#444" stroke-width=".6"/><path d="M43,7 l2,-2 l2,2 l-2,2z" fill="#e040e0"/>
 <rect x="12" y="24" width="35" height="27" fill="#8a8a8a"/>
 <rect x="6" y="19" width="36" height="27" fill="#b2b2b2"/>
 <path d="M6.5,46 V19.5 H42" fill="none" stroke="#e0e0e0" stroke-width="1"/><path d="M6,46.5 H42.5 V19" fill="none" stroke="#4a4a4a" stroke-width="1"/>
 <rect x="16" y="24" width="15" height="9" fill="#fff"/><rect x="17" y="25" width="13" height="3" fill="#40e0a0"/><rect x="17" y="28" width="13" height="4" fill="#111"/>
</svg>
<!-- no plug -->
<svg class="abs" style="left:394px;top:686px" width="48" height="48" viewBox="0 0 48 48">
 <path d="M7,30 C8,22 14,18 22,17 L30,14 L30,10 H33 V15 H39 V18 H33 V24 H39 V27 H33 V31 H30 V29 L22,28 C17,28 14,30 12,34 Z" fill="#222"/>
 <circle cx="23.5" cy="23.500" r="20.500" fill="none" stroke="#f00" stroke-width="4"/>
 <path d="M9.5,9.500 L37.5,37.500" stroke="#f00" stroke-width="4"/>
</svg>
<!-- lock -->
<svg class="abs" style="left:453px;top:672px" width="18" height="20" viewBox="0 0 18 20">
 <path d="M5,8 V5 C5,1 13,1 13,5 V8" fill="none" stroke="#333" stroke-width="2.6"/><path d="M5,8 V5 C5,1.500 13,1.500 13,5 V8" fill="none" stroke="#ddd" stroke-width="1"/>
 <rect x="2" y="8" width="14" height="10" fill="#c8c8c8" stroke="#333" stroke-width="1"/><path d="M3,11 h12 M3,13 h12 M3,15 h12" stroke="#777" stroke-width="1"/>
</svg>
<!-- workspace switch -->
<div class="wsb" style="top:670px">Workspace</div>
<div class="wsb" style="top:706px">Playtime</div>
<svg class="abs" style="left:612px;top:669px" width="26" height="26" viewBox="0 0 52 52"><use href="#glb"/></svg>
<div class="abs" style="left:613px;top:714px;width:25px;height:17px;border:1px solid #222;font-family:'Liberation Sans',sans-serif;font-size:12px;line-height:15px;text-align:center;letter-spacing:-.9px;transform-origin:0 0">EXIT</div>
<!-- volume -->
<svg class="abs" style="left:646px;top:684px" width="46" height="50" viewBox="0 0 46 50">
 <defs><linearGradient id="spk" x1="0" x2="1"><stop offset="0" stop-color="#f4f4f4"/><stop offset=".35" stop-color="#b4b4b4"/><stop offset=".7" stop-color="#6a6a6a"/><stop offset="1" stop-color="#9a9a9a"/></linearGradient></defs>
 <path d="M12,13 C7,19 7,31 12,37 M7,17 C3,22 3,28 7,33" fill="none" stroke="#444" stroke-width="1.100"/>
 <path d="M16,5 L20,5 L33,14 L39,15 L39,36 L33,37 L20,46 L16,46 Z" fill="url(#spk)" stroke="#3a3a3a" stroke-width="1"/>
 <path d="M16.500,6 V45" stroke="#fff" stroke-width="1"/>
 <rect x="28" y="6" width="4.500" height="38" fill="#f4f4f4" stroke="#222" stroke-width="1"/>
 <rect x="26" y="11.500" width="8.500" height="5.500" rx="1.500" fill="#2c3cc0" stroke="#111" stroke-width=".8"/>
 <path d="M27,13.500 h6.500 M27,15.500 h6.500" stroke="#9ab0ff" stroke-width=".8" stroke-dasharray="1 1"/>
</svg>
<!-- style manager -->
<svg class="abs" style="left:700px;top:684px" width="52" height="50" viewBox="0 0 52 50">
 <defs><linearGradient id="mse" x1="0" x2="0" y1="0" y2="1"><stop offset="0" stop-color="#f4f4f4"/><stop offset=".4" stop-color="#c4c4c4"/><stop offset="1" stop-color="#6e6e6e"/></linearGradient></defs>
 <path d="M7,7 H42 V32 H7 Z" fill="#b4b4b4" stroke="#333" stroke-width="1"/><path d="M7.500,8 H41.500" stroke="#f0f0f0" stroke-width="1"/><path d="M7,16.500 H42" stroke="#555" stroke-width=".8"/>
 <rect x="12" y="10" width="11" height="8" fill="#a4a4a4" stroke="#444" stroke-width=".8"/><path d="M15,14 h5" stroke="#222" stroke-width="1.200"/>
 <path d="M2,15 h6 v7" fill="none" stroke="#f4f4f4" stroke-width="1.500"/><path d="M2,16 h5 v6" fill="none" stroke="#333" stroke-width=".7"/>
 <rect x="2.500" y="20.500" width="15" height="24" rx="4" fill="url(#mse)" stroke="#555" stroke-width="1"/><path d="M7.500,22 v8 M12.500,22 v8 M3,30.500 h14" stroke="#777" stroke-width="1"/><path d="M4,23 v6 M9,23 v6 M14,23 v6" stroke="#fff" stroke-width="1"/>
 <ellipse cx="37" cy="16" rx="11.500" ry="7" fill="#ece6d2" stroke="#333" stroke-width="1" transform="rotate(-12 37 16)"/>
 <circle cx="29.500" cy="17" r="2.200" fill="#f01818"/><circle cx="34" cy="12.500" r="2.200" fill="#f0e018"/><circle cx="41" cy="11" r="2" fill="#e838e8"/><circle cx="36" cy="19.500" r="2.400" fill="#1838f0"/><circle cx="42" cy="18" r="2.200" fill="#18a838"/>
 <text x="23" y="40" font-family="'Liberation Serif',serif" font-weight="bold" font-size="21" fill="#fff" stroke="#111" stroke-width=".9" textLength="12.500" lengthAdjust="spacingAndGlyphs">T</text>
 <text x="34.500" y="42" font-family="'Liberation Serif',serif" font-weight="bold" font-size="15" fill="#fff" stroke="#111" stroke-width=".8">T</text>
 <text x="42.500" y="43.500" font-family="'Liberation Serif',serif" font-weight="bold" font-size="9" fill="#fff" stroke="#111" stroke-width=".6">T</text>
</svg>
<!-- terminal / computer -->
<svg class="abs" style="left:756px;top:686px" width="52" height="50" viewBox="0 0 52 50">
 <rect x="9" y="2" width="34" height="29" fill="#c8c8c8" stroke="#555" stroke-width="1"/><path d="M9.5,31 V2.500 H43" fill="none" stroke="#f4f4f4" stroke-width="1"/>
 <rect x="13" y="6" width="26" height="21" fill="#6e6e6e" stroke="#333" stroke-width="1"/>
 <rect x="15" y="9" width="13" height="9" fill="#50d8d8" stroke="#eee" stroke-width="1"/><rect x="22" y="15" width="14" height="9" fill="#f4f4f4" stroke="#444" stroke-width=".8"/><path d="M24,18 h9 M24,20 h9" stroke="#333" stroke-width="1" stroke-dasharray="1 1"/>
 <path d="M20,31 h12 v4 h-12z" fill="#888"/>
 <rect x="5" y="35" width="43" height="8" fill="#e8e8e8" stroke="#555" stroke-width="1"/><path d="M6,43.500 H48" stroke="#333" stroke-width="2"/>
 <path d="M8,39 l4,-2.500 v5z" fill="#2030e0"/><path d="M12,39 h6" stroke="#2030e0" stroke-width="1.5" stroke-dasharray="2 1"/><path d="M34,39 h8" stroke="#666" stroke-width="1.5" stroke-dasharray="1.500 1"/>
 <path d="M7,45 h8 M38,45 h8" stroke="#222" stroke-width="2"/>
</svg>
<!-- help books -->
<svg class="abs" style="left:818px;top:688px" width="46" height="44" viewBox="0 0 46 44">
 <rect x="4" y="10" width="6.500" height="29" fill="#a2a2a2" stroke="#444" stroke-width=".8"/><path d="M5.500,14 h3.500 M5.500,17 h3.500 M5.500,20 h3.500" stroke="#ddd" stroke-width="1"/>
 <rect x="10.500" y="7" width="4" height="32" fill="#38d0d0"/><rect x="14.500" y="7" width="3.500" height="32" fill="#d02030"/><rect x="10.500" y="7" width="7.500" height="32" fill="none" stroke="#333" stroke-width=".8"/>
 <rect x="18.500" y="9" width="10" height="30" fill="#6e6e6e" stroke="#333" stroke-width=".8"/>
 <rect x="28.500" y="10" width="5.500" height="29" fill="#2838b8" stroke="#222" stroke-width=".8"/>
 <rect x="35.500" y="9" width="7" height="30" fill="#8a8a8a" stroke="#444" stroke-width=".8"/>
 <path d="M3,39.500 H44" stroke="#eee" stroke-width="1"/>
 <text x="16.500" y="31" font-family="'Liberation Sans',sans-serif" font-weight="bold" font-size="22" fill="#fff" stroke="#fff" stroke-width=".7">?</text>
</svg>
<!-- trash -->
<svg class="abs" style="left:884px;top:693px" width="30" height="40" viewBox="0 0 30 40">
 <path d="M5,5 C5,2 8,2 10,2 H22 C25,2 26,4 26,6 V35 H5 Z" fill="#a8a8a8" stroke="#555" stroke-width="1"/>
 <path d="M5.500,34 V5 C6,3 8,2.500 10,2.500 H22" fill="none" stroke="#eee" stroke-width="1"/>
 <path d="M5,8.500 H26" stroke="#888" stroke-width="1"/>
 <path d="M26.500,6 V35.500 H5" fill="none" stroke="#444" stroke-width="1.200"/>
 <rect x="13" y="31" width="7" height="3" fill="#eee" stroke="#222" stroke-width=".8"/>
</svg>
<!-- panel status strip -->
<div class="abs" style="left:135px;top:744px;width:828px;height:20px;background:#1a4314;border-top:1px solid #6e6e6e"></div>
<div class="abs" style="left:137px;top:744px;font-family:'Liberation Mono','Noto Sans CJK SC',monospace;font-size:14px;line-height:19px;color:#000;white-space:pre;letter-spacing:-1.2px">[ 英文/欧洲文 ]</div>

</body>
</html>
